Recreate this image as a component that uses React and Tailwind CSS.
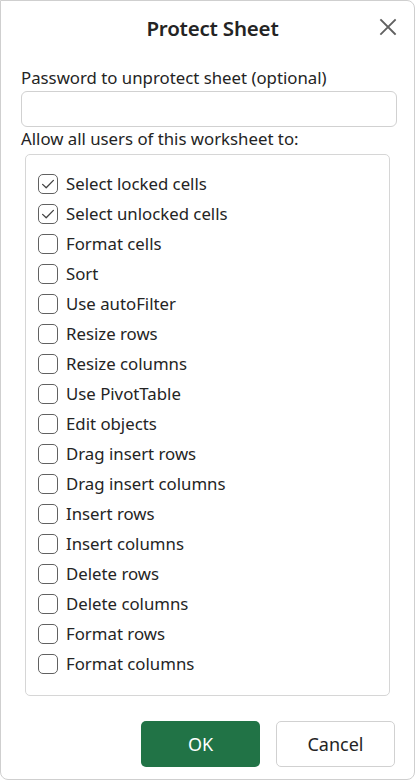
import { useState } from 'react';

const options = [
  { label: 'Select locked cells', checked: true },
  { label: 'Select unlocked cells', checked: true },
  { label: 'Format cells' },
  { label: 'Sort' },
  { label: 'Use autoFilter' },
  { label: 'Resize rows' },
  { label: 'Resize columns' },
  { label: 'Use PivotTable' },
  { label: 'Edit objects' },
  { label: 'Drag insert rows' },
  { label: 'Drag insert columns' },
  { label: 'Insert rows' },
  { label: 'Insert columns' },
  { label: 'Delete rows' },
  { label: 'Delete columns' },
  { label: 'Format rows' },
  { label: 'Format columns' },
];

const Checkbox = ({ checked, onClick }) => (
  <button
    onClick={onClick}
    className="w-[20px] h-[20px] rounded-[5px] border-[1.3px] border-[#616161] bg-white flex items-center justify-center shrink-0"
  >
    {checked && (
      <svg width="16" height="16" viewBox="0 0 16 16" fill="none">
        <path d="M2.6 8.4 L6.2 11.8 L13.4 4.4" stroke="#424242" strokeWidth="1.3" strokeLinecap="round" strokeLinejoin="round" />
      </svg>
    )}
  </button>
);

export default function App() {
  const [items, setItems] = useState(options.map((o) => !!o.checked));
  const [password, setPassword] = useState('');

  const toggle = (i) => setItems(items.map((v, idx) => (idx === i ? !v : v)));

  return (
    <div className="w-[416px] h-[781px] bg-white" style={{ fontFamily: '"Noto Sans", "Open Sans", sans-serif' }}>
      <div className="w-[415px] h-[780px] border border-[#cfcfcf] rounded-b-[8px] rounded-tr-[8px] bg-white flex flex-col text-[#242424]">
        {/* header */}
        <div className="relative h-[55px] flex items-center justify-center pl-[10px]">
          <h1 className="text-[20.5px] font-semibold text-[#242424] tracking-[-0.2px]">Protect Sheet</h1>
          <button className="absolute right-[17px] top-[17px] w-[18px] h-[18px] flex items-center justify-center">
            <svg width="18" height="18" viewBox="0 0 18 18">
              <path d="M2 2 L16 16 M16 2 L2 16" stroke="#616161" strokeWidth="1.8" strokeLinecap="square" />
            </svg>
          </button>
        </div>

        <div className="px-[20px] pt-[10px]">
          <label className="block text-[16.8px] leading-[24px] text-[#242424]">Password to unprotect sheet (optional)</label>
          <input
            type="password"
            value={password}
            onChange={(e) => setPassword(e.target.value)}
            className="mt-[1px] w-[376px] h-[36px] rounded-[6px] border border-[#d1d1d1] px-2 outline-none"
          />
          <p className="mt-[0px] text-[16.8px] leading-[24px] text-[#242424]">Allow all users of this worksheet to:</p>
        </div>

        <div className="mx-[24px] mt-[3px] h-[542px] rounded-[5px] border border-[#d6d6d6] pt-[14px] pl-[12px]">
          {options.map((o, i) => (
            <div key={o.label} className="flex items-center gap-[8px] h-[30px]">
              <Checkbox checked={items[i]} onClick={() => toggle(i)} />
              <span className="text-[16.8px] text-[#242424]">{o.label}</span>
            </div>
          ))}
        </div>

        <div className="flex justify-end gap-[16px] pr-[19px] mt-[25px]">
          <button className="w-[119px] h-[46px] rounded-[5px] bg-[#217346] text-white text-[18px]">OK</button>
          <button className="w-[119px] h-[46px] rounded-[5px] border border-[#d1d1d1] bg-white text-[#242424] text-[18px]">Cancel</button>
        </div>
      </div>
    </div>
  );
}
